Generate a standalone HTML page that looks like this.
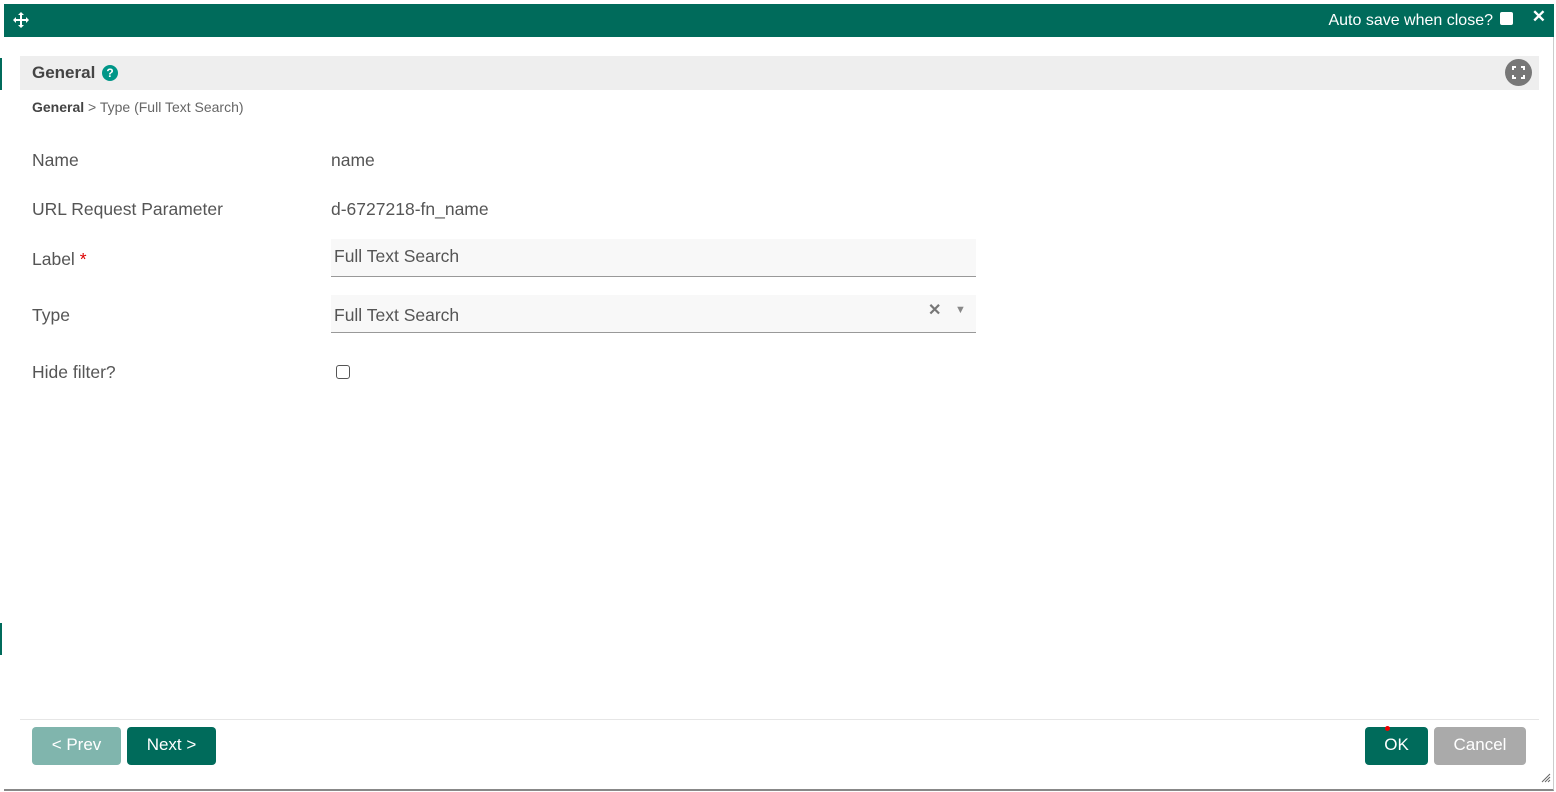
<!DOCTYPE html>
<html><head><meta charset="utf-8"><style>
*{box-sizing:border-box;margin:0;padding:0}
html,body{width:1556px;height:792px;overflow:hidden;background:#fff;font-family:"Liberation Sans",Arial,sans-serif;}
.dlg{position:absolute;left:4px;top:4px;width:1550px;height:787px;background:#fff;border-bottom:2px solid #888;border-right:1px solid #ccc;}
.hdr{position:absolute;left:0;top:0;width:1550px;height:33px;background:#006b5b;color:#fff;}
.leftmark{position:absolute;left:0;width:2px;background:#006b5b}
.sec{position:absolute;left:16px;top:52px;width:1519px;height:34px;background:#eeeeee;}
.lbl{position:absolute;left:28px;font-size:17.5px;color:#555;}
.val{position:absolute;left:327px;font-size:17.5px;color:#555;}
.inp{position:absolute;left:327px;width:645px;height:38px;background:#f8f8f8;border-bottom:1px solid #999;font-size:17.5px;color:#555;padding:7px 0 0 3px;}
.btn{position:absolute;top:723px;height:38px;border-radius:4px;color:#fff;font-size:17px;text-align:center;line-height:36px;}
</style></head><body>
<div class="leftmark" style="top:58px;height:32px"></div>
<div class="leftmark" style="top:623px;height:32px"></div>
<div class="dlg">
 <div class="hdr">
  <svg style="position:absolute;left:9px;top:8px" width="16" height="16" viewBox="0 0 16 16" fill="#fff"><path d="M8 0l3 3H9v4h4V5l3 3-3 3V9H9v4h2l-3 3-3-3h2V9H3v2L0 8l3-3v2h4V3H5z"/></svg>
  <div style="position:absolute;right:61px;top:8px;font-size:16px;">Auto save when close?</div>
  <div style="position:absolute;right:41px;top:8px;width:13px;height:13px;background:#fff;border-radius:2px"></div>
  <div style="position:absolute;right:8px;top:3px;font-size:17px;font-weight:bold">✕</div>
 </div>
 <div class="sec">
  <div style="position:absolute;left:12px;top:7px;font-size:17px;font-weight:bold;color:#444">General</div>
  <div style="position:absolute;left:82px;top:9px;width:16px;height:16px;border-radius:50%;background:#009688;color:#fff;font-size:12px;font-weight:bold;text-align:center;line-height:16px">?</div>
  <div style="position:absolute;left:1485px;top:3px;width:27px;height:27px;border-radius:50%;background:#777;">
   <svg width="27" height="27" viewBox="0 0 27 27" fill="none" stroke="#fff" stroke-width="2"><path d="M8 11V8h3M16 8h3v3M19 16v3h-3M11 19H8v-3"/></svg>
  </div>
 </div>
 <div style="position:absolute;left:28px;top:95px;font-size:14px;color:#666"><b style="color:#444">General</b> &gt; Type (Full Text Search)</div>
 <div class="lbl" style="top:146px">Name</div><div class="val" style="top:146px">name</div>
 <div class="lbl" style="top:195px">URL Request Parameter</div><div class="val" style="top:195px">d-6727218-fn_name</div>
 <div class="lbl" style="top:245px">Label <span style="color:#d00">*</span></div>
 <div class="inp" style="top:235px">Full Text Search</div>
 <div class="lbl" style="top:301px">Type</div>
 <div class="inp" style="top:291px;padding-top:10px">Full Text Search
  <span style="position:absolute;left:597px;top:5px;color:#777;font-size:16px;font-weight:bold">✕</span>
  <span style="position:absolute;left:624px;top:9px;color:#888;font-size:11px">▼</span></div>
 <div class="lbl" style="top:358px">Hide filter?</div>
 <div style="position:absolute;left:332px;top:361px;width:14px;height:14px;border:1px solid #555;border-radius:3px"></div>
 <div style="position:absolute;left:16px;top:715px;width:1519px;height:1px;background:#e6e6e6"></div>
 <div class="btn" style="left:28px;width:89px;background:#80b5ad">&lt; Prev</div>
 <div class="btn" style="left:123px;width:89px;background:#006b5b">Next &gt;</div>
 <div class="btn" style="left:1361px;width:63px;background:#006b5b">OK<span style="position:absolute;left:20px;top:-1px;width:5px;height:5px;border-radius:50%;background:#e00"></span></div>
 <div class="btn" style="left:1430px;width:92px;background:#aaa">Cancel</div>
 <svg style="position:absolute;left:1537px;top:769px" width="10" height="10" viewBox="0 0 10 10" stroke="#666"><path d="M9 1L1 9M9 4L4 9M9 7L7 9"/></svg>
</div>
</body></html>
